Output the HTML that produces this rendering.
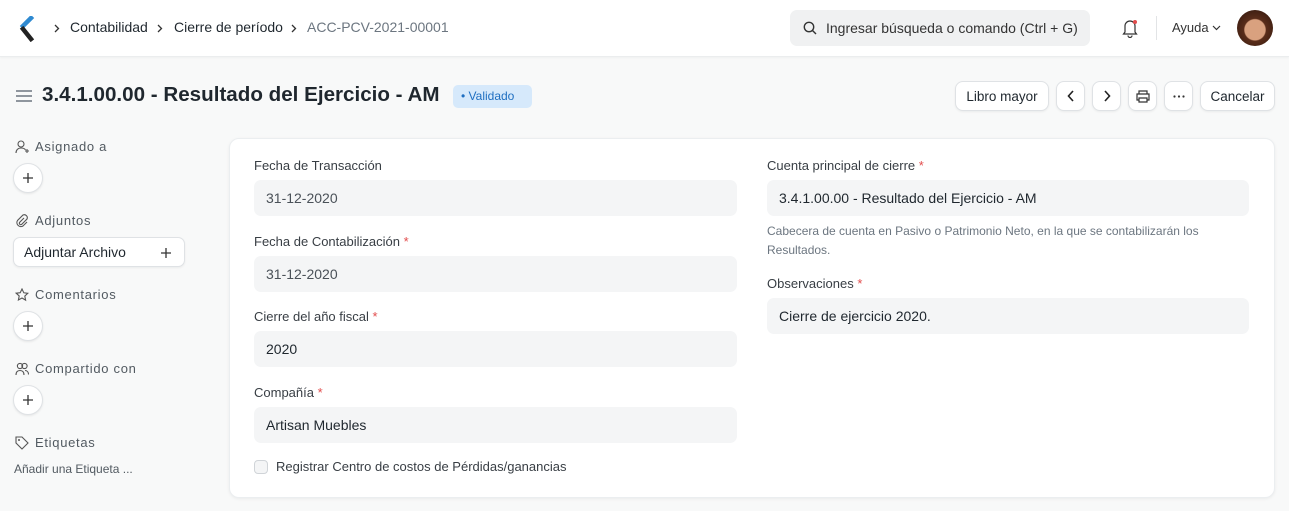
<!DOCTYPE html>
<html><head><meta charset="utf-8"><style>
*{box-sizing:border-box;margin:0;padding:0}
body{width:1289px;height:511px;overflow:hidden;background:#f8f9f9;font-family:"Liberation Sans",sans-serif;color:#1f272e;position:relative}
.abs{position:absolute}
.hdr{left:0;top:0;width:1289px;height:57px;background:#fff;border-bottom:1px solid #ebedee;box-shadow:0 1px 2px rgba(0,0,0,.04)}
.t13{font-size:14px}
.btn{position:absolute;top:81px;height:30px;background:#fff;border:1px solid #dfe2e5;border-radius:8px;box-shadow:0 1px 2px rgba(0,0,0,.06);font-size:13.5px;display:flex;align-items:center;justify-content:center;color:#1f272e}
.card{left:229px;top:138px;width:1046px;height:360px;background:#fff;border:1px solid #ebeef0;border-radius:10px;box-shadow:0 1px 3px rgba(0,0,0,.06)}
.lbl{position:absolute;font-size:13px;color:#383e44}
.req{color:#e24c4c}
.inp{position:absolute;height:36px;background:#f4f5f6;border-radius:7px;font-size:14px;padding-left:12px;line-height:36px;color:#1f272e}
.side{position:absolute;left:35px;font-size:13px;color:#525a61;letter-spacing:.7px}
.sico{position:absolute;left:15px}
.circ{position:absolute;left:13px;width:30px;height:30px;border-radius:50%;background:#fff;border:1px solid #dfe2e5;box-shadow:0 1px 2px rgba(0,0,0,.08);display:flex;align-items:center;justify-content:center}
</style></head><body>
<div class="abs hdr"></div>
<svg class="abs" style="left:19px;top:16px" width="16" height="26" viewBox="0 0 16 26"><path d="M12 2 L4 10" stroke="#2f8ad1" stroke-width="4.5" stroke-linecap="square"/><path d="M4 13 L12 23" stroke="#222" stroke-width="4.5" stroke-linecap="square"/></svg>
<svg class="abs" style="left:54px;top:24px" width="6" height="9"><path d="M1 1l3.5 3.5L1 8" fill="none" stroke="#333" stroke-width="1.3"/></svg>
<div class="abs t13" style="left:70px;top:19px">Contabilidad</div>
<svg class="abs" style="left:157px;top:24px" width="6" height="9"><path d="M1 1l3.5 3.5L1 8" fill="none" stroke="#333" stroke-width="1.3"/></svg>
<div class="abs t13" style="left:174px;top:19px">Cierre de período</div>
<svg class="abs" style="left:291px;top:24px" width="6" height="9"><path d="M1 1l3.5 3.5L1 8" fill="none" stroke="#333" stroke-width="1.3"/></svg>
<div class="abs t13" style="left:307px;top:19px;color:#6c7680">ACC-PCV-2021-00001</div>
<div class="abs" style="left:790px;top:10px;width:300px;height:36px;background:#f0f1f2;border-radius:7px"></div>
<svg class="abs" style="left:803px;top:21px" width="14" height="14" viewBox="0 0 14 14"><circle cx="6" cy="6" r="4.7" fill="none" stroke="#333" stroke-width="1.4"/><path d="M9.5 9.5L13 13" stroke="#333" stroke-width="1.4"/></svg>
<div class="abs t13" style="left:826px;top:20px;color:#333">Ingresar búsqueda o comando (Ctrl + G)</div>
<svg class="abs" style="left:1121px;top:18px" width="18" height="20" viewBox="0 0 18 20"><path d="M4 14V8a5 5 0 0 1 10 0v6l1.5 2h-13z M7 17.5a2 2 0 0 0 4 0" fill="none" stroke="#333" stroke-width="1.2"/><circle cx="14" cy="4" r="2" fill="#e24c4c"/></svg>
<div class="abs" style="left:1156px;top:16px;width:1px;height:24px;background:#e2e4e6"></div>
<div class="abs" style="left:1172px;top:20px;font-size:13px;color:#333">Ayuda</div>
<svg class="abs" style="left:1212px;top:25px" width="9" height="6"><path d="M1 1l3.5 3.5L8 1" fill="none" stroke="#333" stroke-width="1.2"/></svg>
<div class="abs" style="left:1237px;top:10px;width:36px;height:36px;border-radius:50%;background:radial-gradient(circle at 50% 55%,#d9a17f 0 38%,#5a2d1a 42%,#2b150c 100%)"></div>
<svg class="abs" style="left:16px;top:89px" width="16" height="14"><path d="M0 2h16M0 7h16M0 12h16" stroke="#6c7680" stroke-width="1.5"/></svg>
<div class="abs" style="left:42px;top:83px;font-size:20.6px;font-weight:bold;color:#1f272e">3.4.1.00.00 - Resultado del Ejercicio - AM</div>
<div class="abs" style="left:453px;top:85px;width:79px;height:23px;background:#d6e9fb;border-radius:5px;font-size:12px;color:#1f6fc1;line-height:23px;padding-left:8px">• Validado</div>
<div class="btn" style="left:955px;width:94px">Libro mayor</div>
<div class="btn" style="left:1056px;width:29px"><svg width="8" height="12"><path d="M6 1L1.5 6 6 11" fill="none" stroke="#222" stroke-width="1.6"/></svg></div>
<div class="btn" style="left:1092px;width:29px"><svg width="8" height="12"><path d="M2 1l4.5 5L2 11" fill="none" stroke="#222" stroke-width="1.6"/></svg></div>
<div class="btn" style="left:1128px;width:29px"><svg width="14" height="13" viewBox="0 0 14 13"><path d="M3 4V1h8v3M3 10H1V4h12v6h-2M3 8h8v4H3z" fill="none" stroke="#333" stroke-width="1.2"/></svg></div>
<div class="btn" style="left:1164px;width:29px"><svg width="12" height="3"><circle cx="1.5" cy="1.5" r="1.1" fill="#333"/><circle cx="6" cy="1.5" r="1.1" fill="#333"/><circle cx="10.5" cy="1.5" r="1.1" fill="#333"/></svg></div>
<div class="btn" style="left:1200px;width:75px">Cancelar</div>

<svg class="sico" style="top:140px" width="14" height="14" viewBox="0 0 14 14"><circle cx="6" cy="4" r="3" fill="none" stroke="#555" stroke-width="1.1"/><path d="M1 13c0-3 2-5 5-5s4 1 4.5 2M10 11h4M12 9v4" fill="none" stroke="#555" stroke-width="1.1"/></svg>
<div class="side" style="top:139px">Asignado a</div>
<div class="circ" style="top:163px"><svg width="12" height="12"><path d="M6 1v10M1 6h10" stroke="#333" stroke-width="1.3"/></svg></div>
<svg class="sico" style="top:214px" width="14" height="14" viewBox="0 0 14 14"><path d="M9 4L4.5 8.5a1.5 1.5 0 0 0 2 2L12 5a3 3 0 0 0-4-4L2.5 6.5a4 4 0 0 0 5.5 5.5L12 8" fill="none" stroke="#555" stroke-width="1.1"/></svg>
<div class="side" style="top:213px">Adjuntos</div>
<div class="abs" style="left:13px;top:237px;width:172px;height:30px;background:#fff;border:1px solid #dfe2e5;border-radius:7px;box-shadow:0 1px 2px rgba(0,0,0,.06);font-size:14px;line-height:28px;padding-left:10px">Adjuntar Archivo<svg style="position:absolute;right:12px;top:9px" width="12" height="12"><path d="M6 1v10M1 6h10" stroke="#333" stroke-width="1.3"/></svg></div>
<svg class="sico" style="top:288px" width="14" height="14" viewBox="0 0 14 14"><path d="M7 1l1.8 3.8 4 .5-3 2.8.8 4L7 10l-3.6 2 .8-4-3-2.8 4-.5z" fill="none" stroke="#555" stroke-width="1.1"/></svg>
<div class="side" style="top:287px">Comentarios</div>
<div class="circ" style="top:311px"><svg width="12" height="12"><path d="M6 1v10M1 6h10" stroke="#333" stroke-width="1.3"/></svg></div>
<svg class="sico" style="top:362px" width="14" height="14" viewBox="0 0 14 14"><circle cx="5" cy="4" r="2.6" fill="none" stroke="#555" stroke-width="1.1"/><circle cx="9.5" cy="4" r="2.6" fill="none" stroke="#555" stroke-width="1.1"/><path d="M1 13c0-3 1.5-4.5 4-4.5s4 1.5 4 4.5M10 8.5c2 0 3.5 1.5 3.5 4" fill="none" stroke="#555" stroke-width="1.1"/></svg>
<div class="side" style="top:361px">Compartido con</div>
<div class="circ" style="top:385px"><svg width="12" height="12"><path d="M6 1v10M1 6h10" stroke="#333" stroke-width="1.3"/></svg></div>
<svg class="sico" style="top:436px" width="14" height="14" viewBox="0 0 14 14"><path d="M1 1h6l6 6-6 6-6-6z" fill="none" stroke="#555" stroke-width="1.1"/><circle cx="4" cy="4" r="1" fill="#555"/></svg>
<div class="side" style="top:435px">Etiquetas</div>
<div class="abs" style="left:14px;top:462px;font-size:12px;color:#525a61">Añadir una Etiqueta ...</div>

<div class="abs card"></div>
<div class="lbl" style="left:254px;top:158px">Fecha de Transacción</div>
<div class="inp" style="left:254px;top:180px;width:483px;color:#4a5158">31-12-2020</div>
<div class="lbl" style="left:254px;top:234px">Fecha de Contabilización <span class="req">*</span></div>
<div class="inp" style="left:254px;top:256px;width:483px;color:#4a5158">31-12-2020</div>
<div class="lbl" style="left:254px;top:309px">Cierre del año fiscal <span class="req">*</span></div>
<div class="inp" style="left:254px;top:331px;width:483px">2020</div>
<div class="lbl" style="left:254px;top:385px">Compañía <span class="req">*</span></div>
<div class="inp" style="left:254px;top:407px;width:483px">Artisan Muebles</div>
<div class="abs" style="left:254px;top:460px;width:14px;height:14px;border:1px solid #d0d4d8;border-radius:4px;background:#f4f5f6"></div>
<div class="lbl" style="left:276px;top:459px">Registrar Centro de costos de Pérdidas/ganancias</div>

<div class="lbl" style="left:767px;top:158px">Cuenta principal de cierre <span class="req">*</span></div>
<div class="inp" style="left:767px;top:180px;width:482px">3.4.1.00.00 - Resultado del Ejercicio - AM</div>
<div class="abs" style="left:767px;top:222px;font-size:12px;color:#6c7680;line-height:19px">Cabecera de cuenta en Pasivo o Patrimonio Neto, en la que se contabilizarán los<br>Resultados.</div>
<div class="lbl" style="left:767px;top:276px">Observaciones <span class="req">*</span></div>
<div class="inp" style="left:767px;top:298px;width:482px">Cierre de ejercicio 2020.</div>
</body></html>
